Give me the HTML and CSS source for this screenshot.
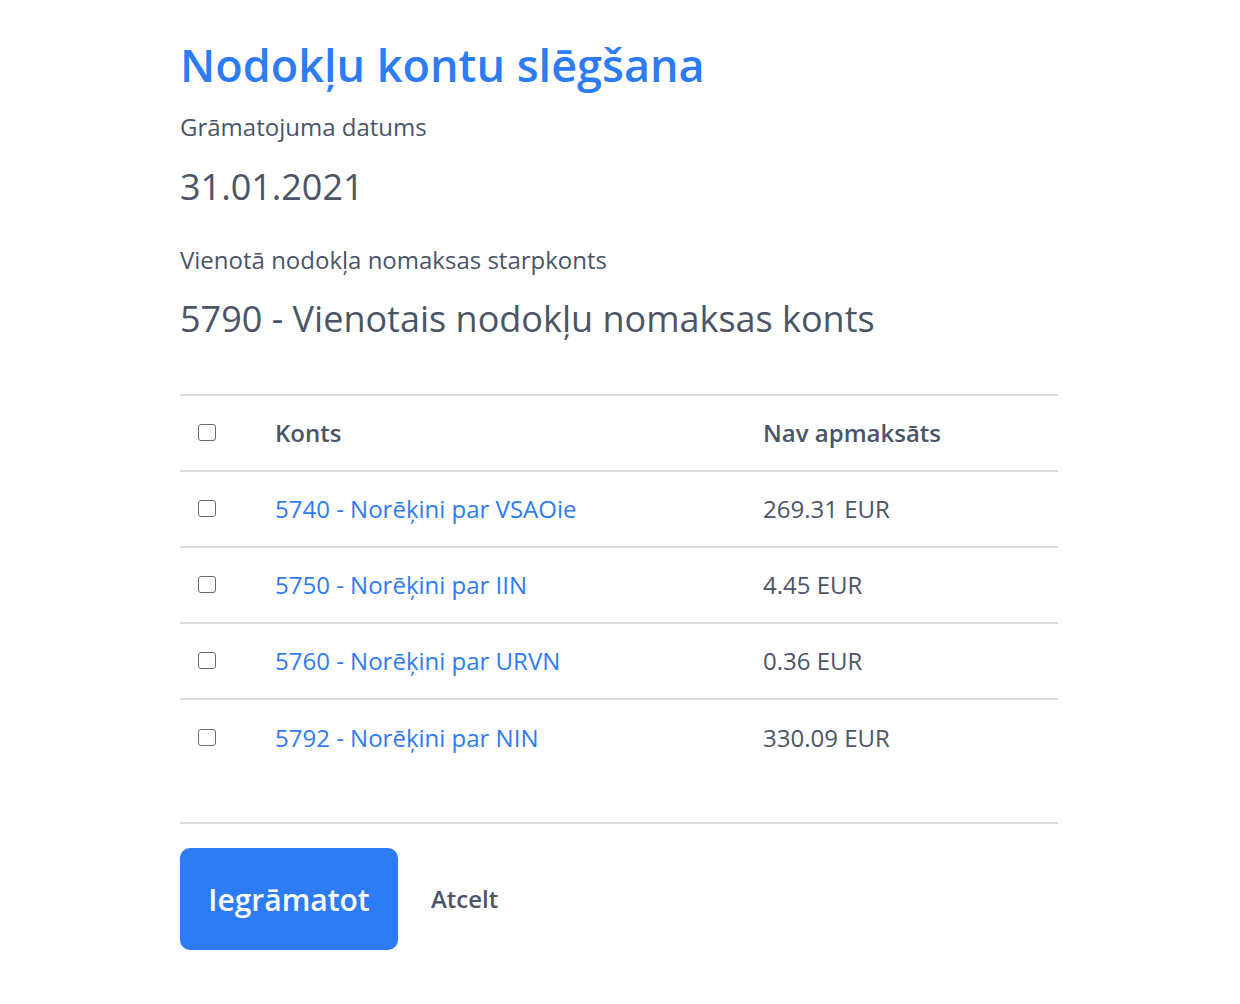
FILE: index.html
```html
<!DOCTYPE html>
<html lang="lv">
<head>
<meta charset="utf-8">
<title>Nodokļu kontu slēgšana</title>
<link rel="stylesheet" href="styles.css">
</head>
<body>
<main class="page">
  <h1 class="title">Nodokļu kontu slēgšana</h1>
  <div class="label label-date">Grāmatojuma datums</div>
  <div class="value value-date">31.01.2021</div>
  <div class="label label-acc">Vienotā nodokļa nomaksas starpkonts</div>
  <div class="value value-acc">5790 - Vienotais nodokļu nomaksas konts</div>

  <section class="table-wrap">
    <div class="row head">
      <div class="cell cb"><span class="box"></span></div>
      <div class="cell">Konts</div>
      <div class="cell">Nav apmaksāts</div>
    </div>
    <div class="row">
      <div class="cell cb"><span class="box"></span></div>
      <div class="cell link">5740 - Norēķini par VSAOie</div>
      <div class="cell">269.31 EUR</div>
    </div>
    <div class="row">
      <div class="cell cb"><span class="box"></span></div>
      <div class="cell link">5750 - Norēķini par IIN</div>
      <div class="cell">4.45 EUR</div>
    </div>
    <div class="row">
      <div class="cell cb"><span class="box"></span></div>
      <div class="cell link">5760 - Norēķini par URVN</div>
      <div class="cell">0.36 EUR</div>
    </div>
    <div class="row last">
      <div class="cell cb"><span class="box"></span></div>
      <div class="cell link">5792 - Norēķini par NIN</div>
      <div class="cell">330.09 EUR</div>
    </div>
  </section>

  <div class="actions">
    <button class="btn-primary">Iegrāmatot</button>
    <button class="btn-link">Atcelt</button>
  </div>
</main>
</body>
</html>
```
FILE: styles.css
```css
* { box-sizing: border-box; }
html, body { margin: 0; padding: 0; background: #fff; }
body {
  font-family: "Open Sans", "Noto Sans", sans-serif;
  color: #4a5567;
}
.page {
  width: 878px;
  margin-left: 180px;
  padding-top: 35px;
}
.title {
  margin: 0;
  font-size: 45px;
  line-height: 60px;
  font-weight: 600;
  color: #2d7cf6;
}
.label {
  font-size: 24px;
  line-height: 34px;
}
.label-date { margin-top: 15px; }
.label-acc { margin-top: 32px; }
.value {
  font-size: 36px;
  line-height: 48px;
}
.value-date { margin-top: 19px; }
.value-acc { margin-top: 18px; }

.table-wrap {
  margin-top: 51px;
  border-top: 2px solid #dcdcdc;
  border-bottom: 2px solid #dcdcdc;
  padding-bottom: 46px;
}
.row {
  display: grid;
  grid-template-columns: 78px 488px 1fr;
  height: 76px;
  padding-bottom: 2px;
  align-items: center;
  border-bottom: 2px solid #dcdcdc;
  font-size: 24px;
}
.row.last { border-bottom: none; }
.row.head { font-weight: 600; }
.cell { padding-left: 17px; }
.cell.cb { padding-left: 18px; padding-top: 0; }
.cell.link { color: #2d7cf6; }
.cb { display: flex; align-items: center; }
.box {
  display: block;
  width: 18px;
  height: 17px;
  border: 1.5px solid #6b6b6b;
  border-radius: 3px;
  background: #fff;
}
.actions {
  display: flex;
  align-items: center;
  gap: 33px;
  margin-top: 24px;
}
.btn-primary {
  width: 218px;
  height: 102px;
  border: none;
  border-radius: 10px;
  background: #2d7cf6;
  color: #fff;
  font-family: inherit;
  font-size: 30px;
  font-weight: 600;
  padding: 0;
}
.btn-link {
  border: none;
  background: none;
  padding: 0 0 2px 0;
  font-family: inherit;
  font-size: 24px;
  font-weight: 600;
  color: #4a5567;
}
```
